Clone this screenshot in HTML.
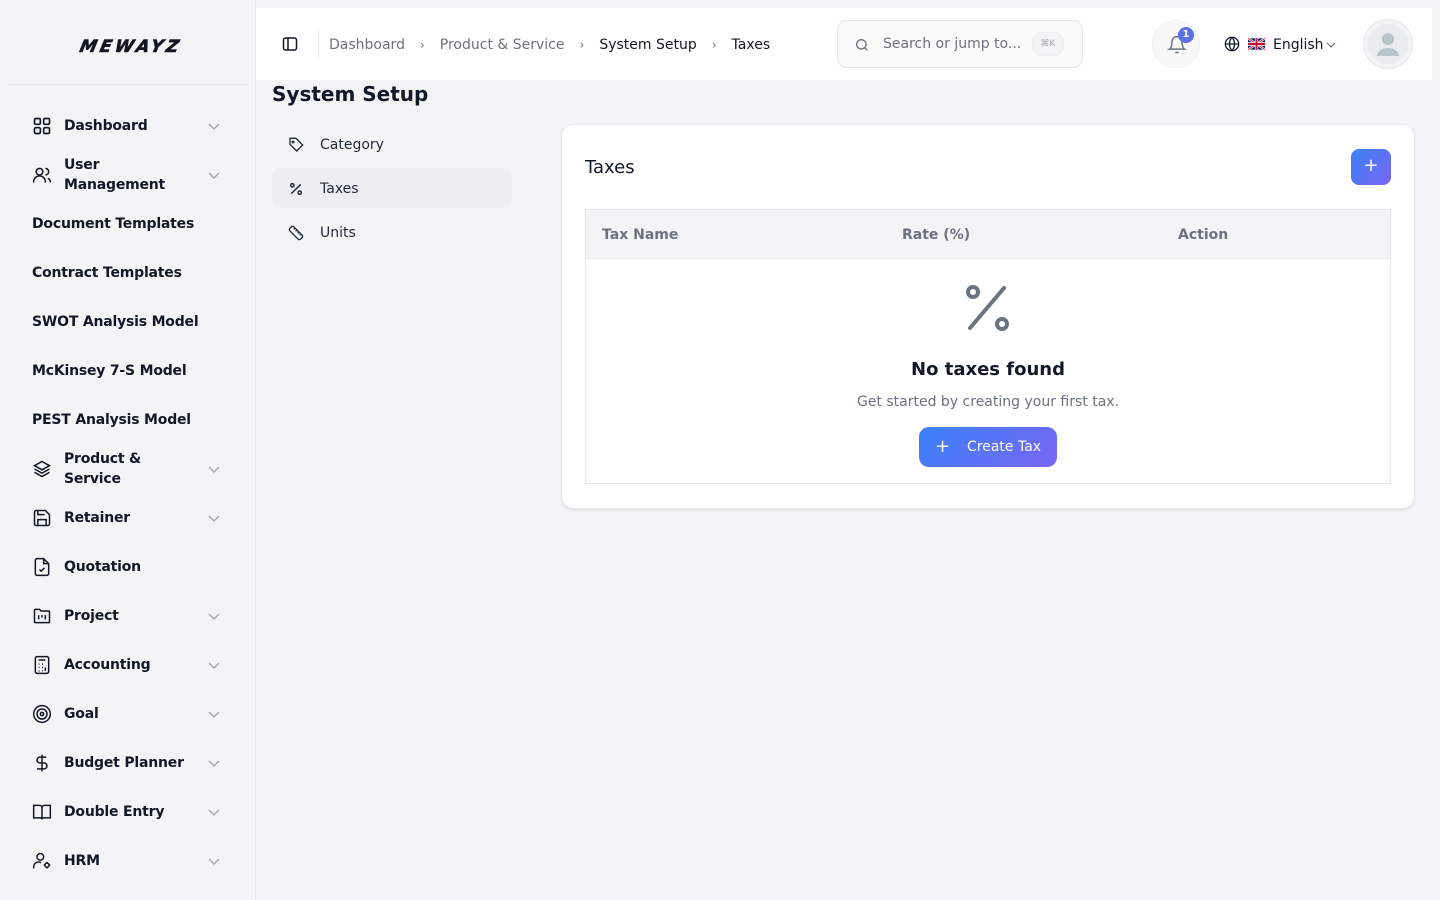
<!DOCTYPE html>
<html><head><meta charset="utf-8"><style>
*{box-sizing:border-box;margin:0;padding:0}
body{width:1440px;height:900px;overflow:hidden;background:#f3f4f6;font-family:"DejaVu Sans","Liberation Sans",sans-serif;color:#111827;position:relative}
.sb{position:absolute;left:0;top:0;width:256px;height:900px;background:#f3f4f6;border-right:1px solid #e5e7eb}
.logo{position:absolute;left:80px;top:37px;font-weight:900;font-style:italic;font-size:17px;letter-spacing:3.2px;transform:skewX(-12deg);-webkit-text-stroke:0.6px #111}
.sbline{position:absolute;left:8px;width:240px;top:84px;border-top:1px solid #e5e7eb}
.it{position:absolute;left:32px;width:196px;height:40px;display:flex;align-items:center;font-weight:bold;font-size:14px;line-height:20px;color:#111827;letter-spacing:-0.2px;margin-top:2px}
.it svg.ic{width:20px;height:20px;margin-right:12px;flex:none}
.it .ch{position:absolute;right:8px;top:14px;width:12px;height:12px}
.hd{position:absolute;left:256px;top:8px;width:1176px;height:72px;background:#fff}
.bc{position:absolute;left:73px;top:29px;font-size:14px;color:#6b7280;display:flex;gap:0;align-items:center}
.bc span.s{margin:0 15px;color:#6b7280;font-size:12px}
.search{position:absolute;left:581px;top:12px;width:246px;height:48px;border:1px solid #e5e7eb;border-radius:10px;background:#fafafa}
.title{position:absolute;left:272px;top:82px;font-size:20px;font-weight:bold}
.sub{position:absolute;left:272px;width:240px;height:40px;border-radius:10px;display:flex;align-items:center;padding-left:16px;font-size:14px;color:#1f2937;padding-top:2px}
.sub svg{width:16px;height:16px;margin-right:16px}
.card{position:absolute;left:561px;top:124px;width:854px;height:385px;background:#fff;border:1px solid #e5e7eb;border-radius:12px;box-shadow:0 2px 2px rgba(0,0,0,.06)}
.grad{background:linear-gradient(135deg,#3b82f6,#8b5cf6 130%)}
</style></head><body>
<div class="sb">
<div class="logo">MEWAYZ</div>
<div class="sbline"></div>
</div>
<div class="it" style="top:104px"><svg class="ic" viewBox="0 0 24 24" fill="none" stroke="#111827" stroke-width="2"><rect x="3" y="3" width="7" height="7" rx="1.5"/><rect x="14" y="3" width="7" height="7" rx="1.5"/><rect x="3" y="14" width="7" height="7" rx="1.5"/><rect x="14" y="14" width="7" height="7" rx="1.5"/></svg>Dashboard<svg class="ch" viewBox="0 0 12 12" fill="none" stroke="#9ca3af" stroke-width="1.3"><path d="M1 4l5 5 5-5"/></svg></div>
<div class="it" style="top:153px"><svg class="ic" viewBox="0 0 24 24" fill="none" stroke="#111827" stroke-width="1.8"><circle cx="9" cy="8" r="4"/><path d="M2 21v-1a7 7 0 0114 0v1M16 4a4 4 0 010 8M19 16a5 5 0 013 5"/></svg>User<br>Management<svg class="ch" viewBox="0 0 12 12" fill="none" stroke="#9ca3af" stroke-width="1.3"><path d="M1 4l5 5 5-5"/></svg></div>
<div class="it" style="top:202px">Document Templates</div>
<div class="it" style="top:251px">Contract Templates</div>
<div class="it" style="top:300px">SWOT Analysis Model</div>
<div class="it" style="top:349px">McKinsey 7-S Model</div>
<div class="it" style="top:398px">PEST Analysis Model</div>
<div class="it" style="top:447px"><svg class="ic" viewBox="0 0 24 24" fill="none" stroke="#111827" stroke-width="1.8"><path d="M12 3l9 5-9 5-9-5z M3 12l9 5 9-5 M3 16l9 5 9-5"/></svg>Product &amp;<br>Service<svg class="ch" viewBox="0 0 12 12" fill="none" stroke="#9ca3af" stroke-width="1.3"><path d="M1 4l5 5 5-5"/></svg></div>
<div class="it" style="top:496px"><svg class="ic" viewBox="0 0 24 24" fill="none" stroke="#111827" stroke-width="1.8"><path d="M5 3h11l5 5v11a2 2 0 01-2 2H5a2 2 0 01-2-2V5a2 2 0 012-2z M7 21v-7h10v7 M7 3v5h8"/></svg>Retainer<svg class="ch" viewBox="0 0 12 12" fill="none" stroke="#9ca3af" stroke-width="1.3"><path d="M1 4l5 5 5-5"/></svg></div>
<div class="it" style="top:545px"><svg class="ic" viewBox="0 0 24 24" fill="none" stroke="#111827" stroke-width="1.8"><path d="M14 2H6a2 2 0 00-2 2v16a2 2 0 002 2h12a2 2 0 002-2V8z M14 2v6h6 M9 15l2 2 4-4"/></svg>Quotation</div>
<div class="it" style="top:594px"><svg class="ic" viewBox="0 0 24 24" fill="none" stroke="#111827" stroke-width="1.8"><path d="M3 5a1 1 0 011-1h5l2 2h9a1 1 0 011 1v12a1 1 0 01-1 1H4a1 1 0 01-1-1z M8 11v5 M12 11v3 M16 11v5"/></svg>Project<svg class="ch" viewBox="0 0 12 12" fill="none" stroke="#9ca3af" stroke-width="1.3"><path d="M1 4l5 5 5-5"/></svg></div>
<div class="it" style="top:643px"><svg class="ic" viewBox="0 0 24 24" fill="none" stroke="#111827" stroke-width="1.8"><rect x="4" y="2" width="16" height="20" rx="2"/><path d="M8 6h8M8 11h1M12 11h1M16 11h0M8 15h1M12 15h1M8 19h1M12 19h1M16 15v4"/></svg>Accounting<svg class="ch" viewBox="0 0 12 12" fill="none" stroke="#9ca3af" stroke-width="1.3"><path d="M1 4l5 5 5-5"/></svg></div>
<div class="it" style="top:692px"><svg class="ic" viewBox="0 0 24 24" fill="none" stroke="#111827" stroke-width="1.8"><circle cx="12" cy="12" r="10"/><circle cx="12" cy="12" r="6"/><circle cx="12" cy="12" r="2"/></svg>Goal<svg class="ch" viewBox="0 0 12 12" fill="none" stroke="#9ca3af" stroke-width="1.3"><path d="M1 4l5 5 5-5"/></svg></div>
<div class="it" style="top:741px"><svg class="ic" viewBox="0 0 24 24" fill="none" stroke="#111827" stroke-width="1.8"><path d="M12 2v20 M17 5H9.5a3.5 3.5 0 000 7h5a3.5 3.5 0 010 7H6"/></svg>Budget Planner<svg class="ch" viewBox="0 0 12 12" fill="none" stroke="#9ca3af" stroke-width="1.3"><path d="M1 4l5 5 5-5"/></svg></div>
<div class="it" style="top:790px"><svg class="ic" viewBox="0 0 24 24" fill="none" stroke="#111827" stroke-width="1.8"><path d="M2 4h7a3 3 0 013 3v14a2 2 0 00-2-2H2z M22 4h-7a3 3 0 00-3 3v14a2 2 0 012-2h8z"/></svg>Double Entry<svg class="ch" viewBox="0 0 12 12" fill="none" stroke="#9ca3af" stroke-width="1.3"><path d="M1 4l5 5 5-5"/></svg></div>
<div class="it" style="top:839px"><svg class="ic" viewBox="0 0 24 24" fill="none" stroke="#111827" stroke-width="1.8"><circle cx="10" cy="7" r="4"/><path d="M2 21v-2a6 6 0 019-5"/><circle cx="18" cy="17" r="2.5"/><path d="M18 13v1.5M18 19.5V21M14 17h1.5M20.5 17H22"/></svg>HRM<svg class="ch" viewBox="0 0 12 12" fill="none" stroke="#9ca3af" stroke-width="1.3"><path d="M1 4l5 5 5-5"/></svg></div>

<div class="hd">
<svg style="position:absolute;left:26px;top:28px" width="16" height="16" viewBox="0 0 16 16" fill="none" stroke="#111827" stroke-width="1.5"><rect x="1.5" y="2" width="13" height="12" rx="2"/><path d="M6 2v12"/></svg>
<div style="position:absolute;left:62px;top:22px;height:28px;border-left:1px solid #f0f0f0"></div>
<div class="bc"><span>Dashboard</span><span class="s">›</span><span>Product &amp; Service</span><span class="s">›</span><span style="color:#111827">System Setup</span><span class="s">›</span><span style="color:#111827">Taxes</span></div>
<div class="search">
<svg style="position:absolute;left:16px;top:16px" width="16" height="16" viewBox="0 0 24 24" fill="none" stroke="#6b7280" stroke-width="2"><circle cx="11" cy="11" r="7"/><path d="M20 20l-4-4"/></svg>
<span style="position:absolute;left:45px;top:15px;font-size:14px;color:#6b7280">Search or jump to...</span>
<span style="position:absolute;left:194px;top:11px;width:32px;height:24px;border-radius:10px;background:#f3f4f6;border:1px solid #eef0f2;font-size:9px;color:#9ca3af;text-align:center;line-height:22px">⌘K</span>
</div>
<div style="position:absolute;left:896px;top:12px;width:48px;height:48px;border-radius:50%;background:#f8f8f8;border:1px solid #f0f0f0">
<svg style="position:absolute;left:14px;top:14px" width="20" height="20" viewBox="0 0 24 24" fill="none" stroke="#6b7280" stroke-width="1.8"><path d="M6 8a6 6 0 0112 0c0 7 3 9 3 9H3s3-2 3-9 M10 21h4"/></svg>
<div style="position:absolute;left:25px;top:6px;width:16px;height:16px;border-radius:50%;background:#5b6fe6;color:#fff;font-size:10px;font-weight:bold;text-align:center;line-height:16px">1</div>
</div>
<svg style="position:absolute;left:968px;top:28px" width="16" height="16" viewBox="0 0 24 24" fill="none" stroke="#111827" stroke-width="2"><circle cx="12" cy="12" r="10"/><path d="M2 12h20M12 2a15 15 0 010 20M12 2a15 15 0 000 20"/></svg>
<svg style="position:absolute;left:992px;top:30px" width="17" height="12" viewBox="0 0 60 40"><rect width="60" height="40" fill="#012169"/><path d="M0 0l60 40M60 0L0 40" stroke="#fff" stroke-width="8"/><path d="M0 0l60 40M60 0L0 40" stroke="#c8102e" stroke-width="3"/><path d="M30 0v40M0 20h60" stroke="#fff" stroke-width="12"/><path d="M30 0v40M0 20h60" stroke="#c8102e" stroke-width="7"/></svg>
<span style="position:absolute;left:1017px;top:29px;font-size:14px;color:#111827">English</span>
<svg style="position:absolute;left:1070px;top:33px" width="10" height="8" viewBox="0 0 10 8" fill="none" stroke="#6b7280" stroke-width="1.2"><path d="M1 2l4 4 4-4"/></svg>
<div style="position:absolute;left:1108px;top:12px;width:48px;height:48px;border-radius:50%;background:#f3f4f6;border:2px solid #f3f4f6;overflow:hidden;box-shadow:0 0 0 1px #e5e7eb">
<div style="position:absolute;left:2px;top:2px;width:40px;height:40px;border-radius:50%;background:#e9edef"></div>
<svg style="position:absolute;left:8px;top:8px" width="28" height="28" viewBox="0 0 28 28" fill="#b8c6cc"><circle cx="14" cy="9" r="6"/><path d="M3 26a11 8 0 0122 0z"/></svg>
</div>
</div>

<div class="title">System Setup</div>
<div class="sub" style="top:124px"><svg viewBox="0 0 24 24" fill="none" stroke="#1f2937" stroke-width="2"><path d="M12 2H3v9l10 10 9-9z"/><circle cx="7.5" cy="7.5" r="1.2"/></svg>Category</div>
<div class="sub" style="top:168px;background:#eceef1"><svg viewBox="0 0 24 24" fill="none" stroke="#1f2937" stroke-width="2.2"><path d="M19 5L5 19"/><circle cx="6.5" cy="6.5" r="2.5"/><circle cx="17.5" cy="17.5" r="2.5"/></svg>Taxes</div>
<div class="sub" style="top:212px"><svg viewBox="0 0 24 24" fill="none" stroke="#1f2937" stroke-width="2"><path d="M21.3 15.3a2.4 2.4 0 010 3.4l-2.6 2.6a2.4 2.4 0 01-3.4 0L2.7 8.7a2.4 2.4 0 010-3.4l2.6-2.6a2.4 2.4 0 013.4 0z M14.5 12.5l2-2 M11.5 9.5l2-2 M8.5 6.5l2-2 M17.5 15.5l2-2"/></svg>Units</div>

<div class="card">
<div style="position:absolute;left:23px;top:32px;font-size:18px;color:#111827">Taxes</div>
<div class="grad" style="position:absolute;left:789px;top:24px;width:40px;height:36px;border-radius:8px;color:#fff;font-size:18px;text-align:center;line-height:34px">+</div>
<div style="position:absolute;left:23px;top:84px;width:806px;height:275px;border:1px solid #e5e7eb">
<div style="height:49px;background:#f3f4f6;border-bottom:1px solid #e5e7eb;position:relative;font-size:14px;font-weight:bold;color:#6b7280">
<span style="position:absolute;left:16px;top:17px">Tax Name</span>
<span style="position:absolute;left:316px;top:17px">Rate (%)</span>
<span style="position:absolute;left:592px;top:17px">Action</span>
</div>
<svg style="position:absolute;left:372px;top:68px" width="60" height="60" viewBox="0 0 60 60" fill="none" stroke="#6b7280" stroke-width="4" stroke-linecap="round"><path d="M46 10L12 50"/><circle cx="15" cy="14" r="5"/><circle cx="44" cy="46" r="5"/></svg>
<div style="position:absolute;left:0;width:804px;top:149px;text-align:center;font-size:18px;font-weight:bold;color:#111827">No taxes found</div>
<div style="position:absolute;left:0;width:804px;top:184px;text-align:center;font-size:14px;color:#6b7280">Get started by creating your first tax.</div>
<div class="grad" style="position:absolute;left:333px;top:217px;width:138px;height:40px;border-radius:10px;color:#fff;font-size:14px;line-height:40px"><span style="position:absolute;left:16px;font-size:18px">+</span><span style="position:absolute;left:48px">Create Tax</span></div>
</div>
</div>
</body></html>
